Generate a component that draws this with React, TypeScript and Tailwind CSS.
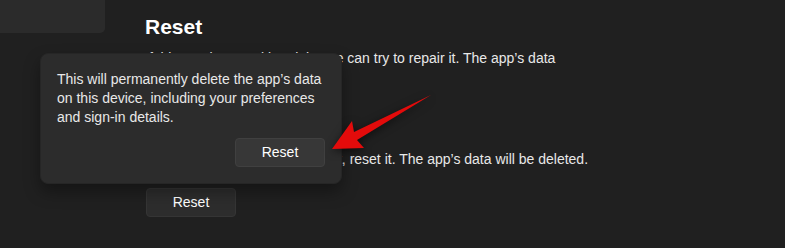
const App = () => {
  return (
    <div
      className="relative w-[785px] h-[248px] overflow-hidden bg-[#202020] text-[#e8e8e8]"
      style={{ fontFamily: '"Liberation Sans", Arial, sans-serif' }}
    >
      <div className="flex">
        {/* nav pane sliver */}
        <div className="w-[105px] shrink-0">
          <div className="h-[33px] rounded-br-[5px] bg-[#2b2b2b]" />
        </div>

        {/* reset section */}
        <div className="ml-[40px] pt-[13px] w-[455px]">
          <h2 className="text-[21px] leading-[28px] font-semibold text-white">Reset</h2>
          <p className="mt-[7px] text-[14px] leading-[20px] whitespace-nowrap">
            If this app isn’t working right, we can try to repair it. The app’s data
            <br />
            won’t be affected.
          </p>
          <button className="mt-[12px] ml-px w-[90px] h-[28px] rounded-[4px] border border-[#353535] bg-[#2d2d2d] text-[14px] text-white">
            Repair
          </button>
          <p className="mt-[21px] text-[14px] leading-[20px] whitespace-nowrap">
            If this app still isn’t working right, reset it. The app’s data will be deleted.
          </p>
          <button className="mt-[19px] ml-px w-[90px] h-[29px] rounded-[4px] border border-[#353535] bg-[#2d2d2d] text-[14px] text-white">
            Reset
          </button>
        </div>
      </div>

      {/* confirmation flyout */}
      <div className="absolute left-[40px] top-[53px] w-[302px] h-[131px] rounded-[8px] border border-[#262626] bg-[#2c2c2c] px-[16px] pt-[16px] shadow-[0_8px_16px_rgba(0,0,0,0.35)]">
        <p className="text-[14px] leading-[19px] text-[#e8e8e8] whitespace-nowrap">
          This will permanently delete the app’s data
          <br />
          on this device, including your preferences
          <br />
          and sign-in details.
        </p>
        <div className="mt-[11px] flex justify-end">
          <button className="w-[90px] h-[29px] rounded-[4px] border border-[#404040] bg-[#373737] text-[14px] text-white">
            Reset
          </button>
        </div>
      </div>

      {/* red callout arrow */}
      <svg
        className="absolute left-[320px] top-[85px] drop-shadow-[0_2px_4px_rgba(0,0,0,0.6)]"
        width="120"
        height="75"
        viewBox="0 0 120 75"
      >
        <path d="M12 64 L32 36 L34 47 L111 10 L37 55 L44 63 Z" fill="#e30b0b" />
      </svg>
    </div>
  );
};

export default App;
